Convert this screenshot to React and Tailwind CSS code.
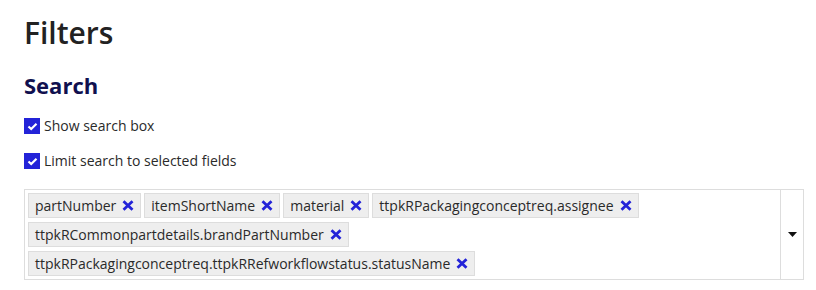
import React from "react";

const Check = () => (
  <span className="w-4 h-4 bg-[#2323d8] flex items-center justify-center shrink-0">
    <svg width="11" height="9" viewBox="0 0 11 9">
      <path d="M1.5 4.5 L4.2 7 L9.5 1.8" fill="none" stroke="white" strokeWidth="2.2" />
    </svg>
  </span>
);

const X = () => (
  <svg width="12" height="11" viewBox="0 0 12 11" className="shrink-0">
    <path d="M1.5 1.2 L10.5 9.8 M10.5 1.2 L1.5 9.8" stroke="#2323d8" strokeWidth="2.8" strokeLinecap="butt" />
  </svg>
);

const Tag = ({ label }) => (
  <div className="flex items-center gap-[6px] h-[25px] pl-[6px] pr-[6px] bg-[#eeeeee] border border-[#dddddd] text-[14px] text-[#2a2a2a]">
    <span>{label}</span>
    <X />
  </div>
);

export default function App() {
  const tags = [
    "partNumber",
    "itemShortName",
    "material",
    "ttpkRPackagingconceptreq.assignee",
    "ttpkRCommonpartdetails.brandPartNumber",
    "ttpkRPackagingconceptreq.ttpkRRefworkflowstatus.statusName",
  ];
  return (
    <div className="w-[816px] h-[290px] bg-white px-6 pt-[13px] font-['Open_Sans',sans-serif] text-[#222]">
      <h1 className="text-[30px] leading-[40px] font-semibold text-[#222]">Filters</h1>
      <h2 className="mt-[17px] text-[22px] leading-[30px] font-bold text-[#10104f]">Search</h2>
      <label className="mt-[16px] flex items-center gap-1 text-[14px] leading-[20px] text-[#2a2a2a]">
        <Check />
        <span>Show search box</span>
      </label>
      <label className="mt-[15px] flex items-center gap-1 text-[14px] leading-[20px] text-[#2a2a2a]">
        <Check />
        <span>Limit search to selected fields</span>
      </label>
      <div className="mt-[18px] w-[780px] flex border border-[#dddddd]">
        <div className="flex-1 flex flex-wrap gap-x-[3px] gap-y-[4px] p-[3px]">
          {tags.map((t) => (
            <Tag key={t} label={t} />
          ))}
        </div>
        <div className="w-[23px] border-l border-[#dddddd] flex items-center justify-center">
          <svg width="9" height="5" viewBox="0 0 9 5">
            <path d="M0 0 L9 0 L4.5 5 Z" fill="#111" />
          </svg>
        </div>
      </div>
    </div>
  );
}
